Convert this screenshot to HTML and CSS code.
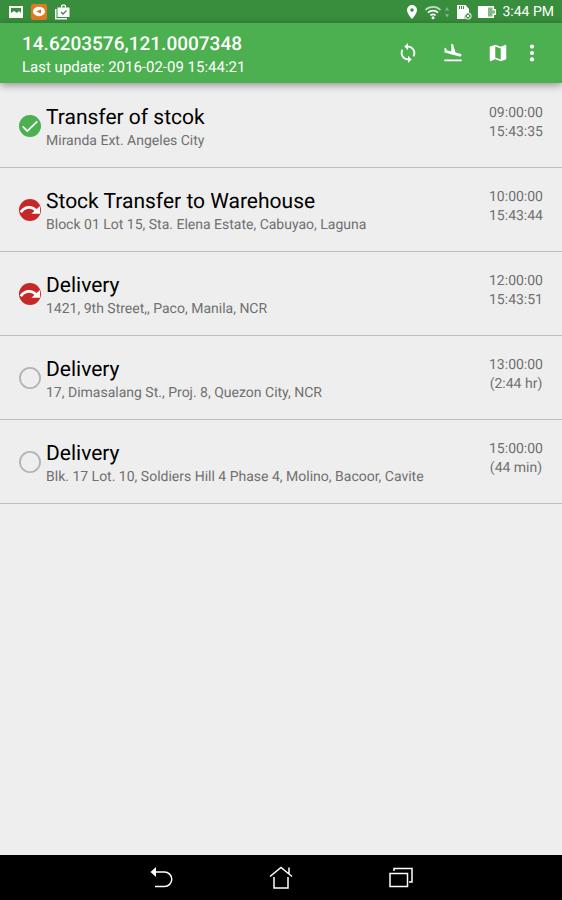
FILE: index.html
```
<!DOCTYPE html>
<html lang="en">
    <head>
        <meta charset="utf-8">
        <meta name="viewport" content="width=device-width, initial-scale=1">
        <title>Deliveries</title>
        <link rel="stylesheet" href="styles.css">
    </head>
    <body>
        <div class="status">
            <div class="status-left">
                <svg class="ic-status" viewBox="0 0 16 16"><path fill="#fff" fill-rule="evenodd" d="M1 2h14v12H1zM3 4v8h10V4zM3 12V9l3-2 3 2 2-2 2 2v3z"/></svg>
                <svg class="ic-status" viewBox="0 0 16 16"><rect width="16" height="16" rx="2" fill="#e07b1f"/><ellipse cx="8" cy="7.500" rx="6" ry="4.700" fill="#fff"/><path fill="#e0701c" d="M5 7.500L10 5.500v4z"/></svg>
                <svg class="ic-status" viewBox="0 0 16 16"><path fill="#fff" fill-rule="evenodd" d="M1 5h1.500v9H13v1.500H1zM3.500 3.500H7V1.500L8 .5h3l1 1v2h3.500V13h-12zM8.200 3.500h2.600V1.700H8.200z"/><path fill="none" stroke="#388e3c" stroke-width="1.300" d="M7 8l2 2 3.500-3.500"/></svg>
            </div>
            <div class="status-right">
                <svg class="ic-status" viewBox="0 0 16 16"><path fill="#fff" fill-rule="evenodd" d="M8 1a5 5 0 0 0-5 5c0 4 5 9 5 9s5-5 5-9a5 5 0 0 0-5-5zm0 3.200a1.800 1.800 0 1 1 0 3.600 1.800 1.800 0 0 1 0-3.600z"/></svg>
                <svg class="ic-wifi" viewBox="0 0 26 16"><g fill="none" stroke="#fff" stroke-width="1.700"><path stroke-opacity=".7" d="M.5 6a10.500 10.500 0 0 1 15 0"/><path d="M3 8.700a7 7 0 0 1 10 0M5.400 11.400a4 4 0 0 1 5.200 0"/></g><circle cx="8" cy="13.700" r="1.500" fill="#fff"/><path fill="#83b885" d="M20 6.500l2-3.500 2 3.500zM20 10l2 3.500 2-3.500z"/></svg>
                <svg class="ic-status" viewBox="0 0 16 16"><path fill="#fff" d="M1 1h8.500L13 5v4a4 4 0 0 0-4 6H1z"/><path stroke="#388e3c" d="M3.500 2v3M5.500 2v3M7.500 2v3"/><circle cx="12" cy="12" r="3.200" fill="#388e3c" stroke="#fff"/><path stroke="#fff" d="M10.500 10.500l3 3M13.500 10.500l-3 3"/></svg>
                <svg class="ic-battery" viewBox="0 0 20 16"><path fill="#83b885" d="M1 2h16v12H1z"/><path fill="none" stroke="#fff" stroke-width="1.500" d="M1.700 2.700h14.600v3h2v4.600h-2v3H1.700z"/><path fill="#fff" d="M1 2h10v12H1z"/></svg>
                <span class="clock">3:44 PM</span>
            </div>
        </div>

        <header class="bar">
            <div class="bar-text">
                <h1 class="bar-title">14.6203576,121.0007348</h1>
                <div class="bar-sub">Last update: 2016-02-09 15:44:21</div>
            </div>
            <div class="actions">
                <button class="action" aria-label="Sync"><svg viewBox="0 0 24 24"><path d="M12 4V1L8 5l4 4V6a6 6 0 0 1 5.250 8.800l1.460 1.460A8 8 0 0 0 12 4zm0 14a6 6 0 0 1-5.250-8.800L5.290 7.740A8 8 0 0 0 12 20v3l4-4-4-4z"/></svg></button>
                <button class="action" aria-label="Arrivals"><svg viewBox="0 0 24 24"><path d="M2.500 19h19v2h-19zM9.680 13.270l4.350 1.160 5.310 1.420c.8.210 1.620-.26 1.840-1.060.21-.8-.26-1.620-1.060-1.840l-5.310-1.420-2.760-9.020L10.120 2v8.280L5.150 8.950l-.93-2.320-1.450-.39v5.170l1.600.43z"/></svg></button>
                <button class="action" aria-label="Map"><svg viewBox="0 0 24 24"><path d="M20.500 3l-.16.030L15 5.100 9 3 3.360 4.900c-.21.070-.36.250-.36.480V20.500c0 .28.220.5.500.5l.16-.03L9 18.900l6 2.100 5.640-1.900c.21-.07.360-.25.360-.48V3.500c0-.28-.22-.5-.5-.5zM15 19l-6-2.110V5l6 2.110z"/></svg></button>
                <button class="action action-more" aria-label="More options"><svg viewBox="0 0 24 24"><circle cx="12" cy="5" r="2.300"/><circle cx="12" cy="12" r="2.300"/><circle cx="12" cy="19" r="2.300"/></svg></button>
            </div>
        </header>

        <main class="content">
            <ul class="list">
                <li class="row">
                    <svg class="mark" viewBox="0 0 24 24" role="img" aria-label="Done"><circle cx="12" cy="12" r="12" fill="#4caf50"/><path class="mark-line" d="M4 12.500l5 5L20 7"/></svg>
                    <div class="info">
                        <div class="name">Transfer of stcok</div>
                        <div class="address">Miranda Ext. Angeles City</div>
                    </div>
                    <div class="times"><div>09:00:00</div><div>15:43:35</div></div>
                </li>
                <li class="row">
                    <svg class="mark" viewBox="0 0 24 24" role="img" aria-label="Skipped"><circle cx="12" cy="12" r="12" fill="#c62828"/><path class="mark-line mark-skip" d="M2 14.500C6 8 14 7 19 13"/><path fill="#fff" d="M23 7.500V16h-9.500z"/></svg>
                    <div class="info">
                        <div class="name">Stock Transfer to Warehouse</div>
                        <div class="address">Block 01 Lot 15, Sta. Elena Estate, Cabuyao, Laguna</div>
                    </div>
                    <div class="times"><div>10:00:00</div><div>15:43:44</div></div>
                </li>
                <li class="row">
                    <svg class="mark" viewBox="0 0 24 24" role="img" aria-label="Skipped"><circle cx="12" cy="12" r="12" fill="#c62828"/><path class="mark-line mark-skip" d="M2 14.500C6 8 14 7 19 13"/><path fill="#fff" d="M23 7.500V16h-9.500z"/></svg>
                    <div class="info">
                        <div class="name">Delivery</div>
                        <div class="address">1421, 9th Street,, Paco, Manila, NCR</div>
                    </div>
                    <div class="times"><div>12:00:00</div><div>15:43:51</div></div>
                </li>
                <li class="row">
                    <svg class="mark" viewBox="0 0 24 24" role="img" aria-label="Pending"><circle class="mark-ring" cx="12" cy="12" r="11"/></svg>
                    <div class="info">
                        <div class="name">Delivery</div>
                        <div class="address">17, Dimasalang St., Proj. 8, Quezon City, NCR</div>
                    </div>
                    <div class="times"><div>13:00:00</div><div>(2:44 hr)</div></div>
                </li>
                <li class="row">
                    <svg class="mark" viewBox="0 0 24 24" role="img" aria-label="Pending"><circle class="mark-ring" cx="12" cy="12" r="11"/></svg>
                    <div class="info">
                        <div class="name">Delivery</div>
                        <div class="address">Blk. 17 Lot. 10, Soldiers Hill 4 Phase 4, Molino, Bacoor, Cavite</div>
                    </div>
                    <div class="times"><div>15:00:00</div><div>(44 min)</div></div>
                </li>
            </ul>
        </main>

        <nav class="navbar">
            <button class="nav-btn" aria-label="Back"><svg viewBox="0 0 24 24"><path d="M5 6h10.500a7 7 0 0 1 0 14.500H6"/><path fill="#fff" stroke="none" d="M1.500 6L7 1v10z"/></svg></button>
            <button class="nav-btn" aria-label="Home"><svg viewBox="0 0 24 24"><path d="M1 10.500L12 1.500l11 9M20 7.500v-6M5 11v11h14V11"/></svg></button>
            <button class="nav-btn" aria-label="Recent apps"><svg viewBox="0 0 24 24"><path d="M1 7.500h17.500v13H1zM5 5V2.500h18V16h-3"/></svg></button>
        </nav>
    </body>
</html>
```
FILE: styles.css
```
* {
    box-sizing: border-box;
}

body {
    margin: 0;
    min-height: 100vh;
    display: flex;
    flex-direction: column;
    background-color: #eee;
    font-family: Roboto, "Liberation Sans", sans-serif;
    text-rendering: geometricPrecision;
}

button {
    padding: 0;
    border: 0;
    background: none;
    cursor: pointer;
}

svg {
    display: block;
}

/* status bar */
.status {
    display: flex;
    justify-content: space-between;
    height: 23px;
    padding: 0 8px;
    background-color: #388e3c;
    color: #fff;
}

.status-left,
.status-right {
    display: flex;
    align-items: center;
}

.status-left {
    gap: 7px;
}

.status-right {
    gap: 5px;
}

.ic-status {
    width: 16px;
    height: 16px;
}

.ic-wifi {
    width: 26px;
    height: 16px;
}

.ic-battery {
    width: 20px;
    height: 16px;
}

.clock {
    padding-top: 2px;
    font-size: 14px;
    line-height: 21px;
}

/* app bar */
.bar {
    display: flex;
    align-items: center;
    justify-content: space-between;
    height: 60px;
    padding: 0 19px 0 22px;
    background-color: #4caf50;
    color: #fff;
    box-shadow: 0 2px 8px rgba(0, 0, 0, 0.4);
}

.bar-text {
    padding-top: 4px;
}

.bar-title {
    margin: 0;
    font-size: 19px;
    line-height: 24px;
    font-weight: 500;
}

.bar-sub {
    font-size: 15px;
    line-height: 22px;
}

.actions {
    display: flex;
    align-items: center;
    gap: 23px;
}

.action svg {
    width: 22px;
    height: 22px;
    fill: #fff;
}

.action-more {
    margin-left: -11px;
}

/* stops */
.content {
    flex: 1;
}

.list {
    margin: 0;
    padding: 1px 0 0;
    list-style: none;
}

.row {
    display: flex;
    align-items: center;
    height: 84px;
    padding: 0 19px;
    border-bottom: 1px solid #bdbfbd;
}

.mark {
    width: 22px;
    height: 22px;
    flex: none;
}

.mark-line {
    fill: none;
    stroke: #fff;
    stroke-width: 2;
}

.mark-skip {
    stroke-width: 3;
}

.mark-ring {
    fill: none;
    stroke: #b4b4b4;
    stroke-width: 2;
}

.info {
    flex: 1;
    padding: 4px 12px 0 5px;
}

.name {
    font-size: 21px;
    line-height: 26px;
    color: #000;
}

.address {
    font-size: 14px;
    line-height: 20px;
    color: #707070;
}

.times {
    padding-bottom: 5px;
    font-size: 14px;
    line-height: 19px;
    text-align: center;
    color: #707070;
}

/* system buttons */
.navbar {
    display: flex;
    justify-content: center;
    align-items: center;
    gap: 96px;
    height: 45px;
    background-color: #000;
}

.nav-btn svg {
    width: 24px;
    height: 24px;
    fill: none;
    stroke: #fff;
    stroke-width: 1.5;
}
```
